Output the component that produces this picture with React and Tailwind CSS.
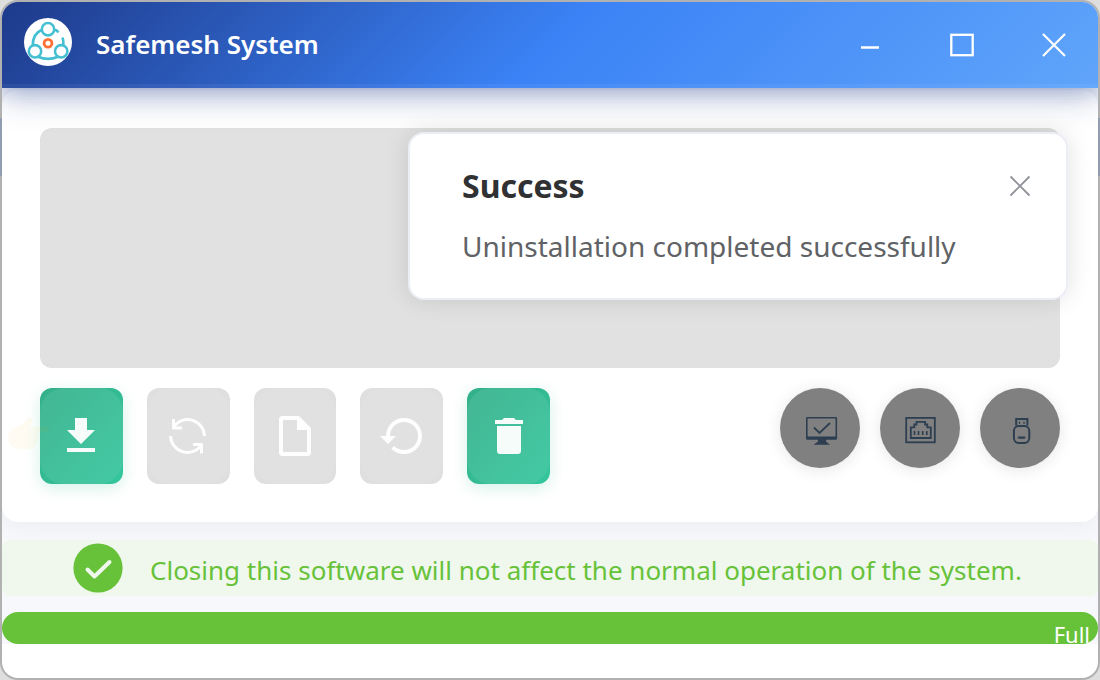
import { useState } from "react";

const ACTIONS = [
  { id: "install", label: "Install", icon: DownloadIcon, enabled: true },
  { id: "update", label: "Update", icon: RefreshIcon, enabled: false },
  { id: "logs", label: "Logs", icon: FileIcon, enabled: false },
  { id: "restore", label: "Restore", icon: RestoreIcon, enabled: false },
  { id: "uninstall", label: "Uninstall", icon: TrashIcon, enabled: true },
];

const DEVICES = [
  { id: "host", label: "Host status", icon: MonitorIcon },
  { id: "network", label: "Network port", icon: EthernetIcon },
  { id: "usb", label: "USB key", icon: UsbIcon },
];

function DownloadIcon() {
  return (
    <svg viewBox="0 0 24 24" className="size-12" fill="currentColor">
      <path d="M19 9h-4V3H9v6H5l7 7 7-7zM5 18v2h14v-2H5z" />
    </svg>
  );
}

function RefreshIcon() {
  return (
    <svg
      viewBox="0 0 48 48"
      className="size-12"
      fill="none"
      stroke="currentColor"
      strokeWidth="3"
    >
      <path d="M40.500 24A17 17 0 0 0 9.500 15" />
      <path d="M9.500 7v9h8.500" strokeLinejoin="round" />
      <path d="M6.500 24A17 17 0 0 0 37.500 33" />
      <path d="M37.500 41.500v-9h-8.500" strokeLinejoin="round" />
    </svg>
  );
}

function FileIcon() {
  return (
    <svg viewBox="0 0 24 24" className="size-12" fill="currentColor">
      <path d="M14 2H5.500C4.700 2 4 2.700 4 3.500v17c0 .8.700 1.500 1.500 1.500h13c.8 0 1.500-.7 1.500-1.500V8l-6-6zM6 20V4h7v5h5v11H6z" />
    </svg>
  );
}

function RestoreIcon() {
  return (
    <svg viewBox="0 0 24 24" className="size-12" fill="currentColor">
      <path d="M13 3a9 9 0 0 0-9 9H1l3.960 4L9 12H6a7 7 0 1 1 7 7c-1.930 0-3.680-.79-4.940-2.060l-1.420 1.420A8.950 8.950 0 0 0 13 21a9 9 0 0 0 0-18z" />
    </svg>
  );
}

function TrashIcon() {
  return (
    <svg viewBox="0 0 24 24" className="size-12" fill="currentColor">
      <path d="M6 19.500c0 .9.600 1.500 1.500 1.500h9c.9 0 1.500-.6 1.500-1.500V7H6v12.500zM19 4h-3.500l-1-1h-5l-1 1H5v2h14V4z" />
    </svg>
  );
}

function MonitorIcon() {
  return (
    <svg viewBox="0 0 40 40" className="size-10" fill="none" stroke="currentColor">
      <rect x="6.800" y="9.800" width="29.500" height="21" rx="0.5" strokeWidth="1.600" />
      <path d="M6.500 28.500h30v3h-30z" fill="currentColor" stroke="none" />
      <path d="M18 31h8v2.500l4 3.300H13.500l4.500-3.300z" fill="currentColor" stroke="none" />
      <path d="M14 19.500l5.500 5.500L30 15" strokeWidth="1.800" />
    </svg>
  );
}

function EthernetIcon() {
  return (
    <svg
      viewBox="0 0 40 40"
      className="size-10"
      fill="none"
      stroke="currentColor"
      strokeWidth="1.800"
    >
      <rect x="6.200" y="9.900" width="28.600" height="24.400" />
      <path d="M10.800 30V19.300h3.500v-2.800h2.200v-2.700h8.600v2.700h2.200v2.800h3.500V30z" />
      <path d="M14.500 23v4M18.500 23v4M22.700 23v4M26.800 23v4" strokeWidth="1.600" />
    </svg>
  );
}

function UsbIcon() {
  return (
    <svg
      viewBox="0 0 40 40"
      className="size-10"
      fill="none"
      stroke="currentColor"
      strokeWidth="2"
    >
      <path d="M16.200 17.500v-6.600h11.200v6.600" />
      <rect x="13.900" y="17.900" width="15.400" height="17" rx="5" />
      <path d="M18.800 29.600h5.600" strokeWidth="2.200" strokeLinecap="round" />
      <path d="M19.500 13.500v2.500M24 13.500v2.500" strokeWidth="1.200" />
    </svg>
  );
}

function Logo() {
  return (
    <svg viewBox="0 0 48 48" className="size-12 mb-1.5" fill="none">
      <circle cx="24" cy="24" r="24" fill="#fff" />
      <g stroke="#45bfd2" strokeWidth="2.600">
        <circle cx="24" cy="11.200" r="6.200" />
        <circle cx="11" cy="33.300" r="6.200" />
        <circle cx="37.200" cy="33.300" r="6.200" />
        <path d="M8.700 27.500C8.700 20 11.500 14.500 18 11.800" />
        <path d="M30 12l2.300.2 2.300 2.200" />
        <path d="M39.300 27.500V23l-.8-3.500" />
        <path d="M14 38.700c6 2.600 14 2.600 20 0" />
      </g>
      <circle cx="24" cy="25.300" r="3.900" stroke="#ff6f31" strokeWidth="2.800" />
    </svg>
  );
}

function TitleBar() {
  return (
    <header className="relative z-10 bg-[linear-gradient(135deg,#1e3a8a_0%,#3b82f6_50%,#60a5fa_100%)] shadow-[0_8px_32px_rgba(30,58,138,0.35),0_4px_16px_rgba(30,58,138,0.15)]">
      <div className="flex h-[86px] items-center border-b-4 border-white/5 pl-[22px] pt-1">
        <Logo />
        <h1 className="mb-0.5 ml-6 flex-1 text-[26px] font-semibold leading-9 text-white">
          Safemesh System
        </h1>
        <div className="flex gap-1 text-white">
          <button
            aria-label="Minimize"
            className="flex h-16 w-[88px] items-center justify-center"
          >
            <svg viewBox="0 0 24 24" className="size-6">
              <path d="M3 14.500h18" stroke="currentColor" strokeWidth="2.600" />
            </svg>
          </button>
          <button
            aria-label="Maximize"
            className="flex h-16 w-[88px] items-center justify-center"
          >
            <svg viewBox="0 0 24 24" className="size-6" fill="none">
              <rect x="1.300" y="1.800" width="21.400" height="20.400" stroke="currentColor" strokeWidth="2.300" />
            </svg>
          </button>
          <button
            aria-label="Close window"
            className="flex h-16 w-[88px] items-center justify-center"
          >
            <svg viewBox="0 0 24 24" className="size-6">
              <path d="M1 1l22 22M23 1L1 23" stroke="currentColor" strokeWidth="2.200" />
            </svg>
          </button>
        </div>
      </div>
    </header>
  );
}

function ActionButton({ label, icon: Icon, enabled }) {
  return (
    <button
      aria-label={label}
      disabled={!enabled}
      className={
        enabled
          ? "h-24 overflow-hidden rounded-xl bg-linear-to-br from-[#33b08a] to-[#33c69d] text-white/95 shadow-[0_4px_16px_rgba(52,190,150,0.2)]"
          : "h-24 overflow-hidden rounded-xl bg-[#dfdfdf] text-white/95"
      }
    >
      <span className="flex h-full items-center justify-center rounded-3xl bg-white/8">
        <Icon />
      </span>
    </button>
  );
}

function Toast({ title, message, onClose }) {
  return (
    <div
      role="alert"
      className="absolute right-[30px] top-[130px] z-20 flex w-[660px] items-start rounded-2xl border-2 border-[#ebeef5] bg-white py-7 pl-[52px] pr-[34px] shadow-[0_0_24px_rgba(0,0,0,0.12)]"
    >
      <div className="flex-1">
        <h2 className="text-[32px] font-bold leading-[48px] text-[#303133]">
          {title}
        </h2>
        <p className="mt-3 text-[28px] leading-[48px] text-[#606266]">
          {message}
        </p>
      </div>
      <button
        aria-label="Dismiss"
        onClick={onClose}
        className="mt-3 flex size-6 items-center justify-center text-[#909399]"
      >
        <svg viewBox="0 0 24 24" className="size-6">
          <path d="M2.500 2.500l19 19M21.500 2.500l-19 19" stroke="currentColor" strokeWidth="1.900" />
        </svg>
      </button>
    </div>
  );
}

// Faint hand that nudges the user toward the first action
function PointerHint() {
  return (
    <svg
      viewBox="0 0 44 40"
      className="absolute -left-8 top-7 h-10 w-11"
      fill="#ffb300"
      fillOpacity="0.05"
    >
      <path d="M0 22c0-7 5-10 12-12l8-8c3-2 5 1 4 4l-2 5h16c4 0 4 5 0 5H30v3c2 2 1 4-1 5 1 2 0 4-2 5 0 2-1 4-4 4H14C6 33 0 29 0 22z" />
    </svg>
  );
}

const App = () => {
  const [showToast, setShowToast] = useState(true);

  return (
    <div className="bg-[linear-gradient(to_bottom,#dedede_118px,#b4c6dd_118px,#b4c6dd_176px,#dedede_176px)] font-['Noto_Sans','Open_Sans',sans-serif]">
      <div className="relative flex min-h-screen flex-col overflow-hidden rounded-[18px] border-2 border-black/20 bg-white bg-clip-padding">
        <TitleBar />

        <div className="bg-[#f7f8fb] pt-0.5">
          <main className="rounded-2xl bg-white p-[38px] shadow-[0_4px_24px_rgba(0,0,0,0.05)]">
            <section
              aria-label="Output"
              className="h-60 overflow-hidden rounded-xl bg-[#dfdfdf]"
            >
              <div className="h-full rounded-2xl bg-white/8" />
            </section>

            <div className="mt-5 grid grid-cols-2">
              <div className="relative grid grid-cols-5 gap-6">
                {ACTIONS.map((action) => (
                  <ActionButton key={action.id} {...action} />
                ))}
                <PointerHint />
              </div>
              <div className="flex justify-end gap-5">
                {DEVICES.map(({ id, label, icon: Icon }) => (
                  <button
                    key={id}
                    aria-label={label}
                    className="flex size-20 items-center justify-center rounded-full bg-[#808080] text-[#2c3e50] shadow-[0_2px_16px_rgba(0,0,0,0.1)]"
                  >
                    <Icon />
                  </button>
                ))}
              </div>
            </div>
          </main>

          <div
            role="status"
            className="mt-[18px] flex h-14 items-center rounded-lg bg-[#f0f8ed] pl-[71px] text-[#67c23a]"
          >
            <svg viewBox="0 0 50 50" className="size-[50px]">
              <circle cx="25" cy="25" r="24.600" fill="currentColor" />
              <path
                d="M14.500 26.500l7 7 15-14.500"
                fill="none"
                stroke="#f0f8ed"
                strokeWidth="4"
                strokeLinecap="round"
                strokeLinejoin="round"
              />
            </svg>
            <p className="ml-[27px] pt-1 text-[26px] leading-9">
              Closing this software will not affect the normal operation of the
              system.
            </p>
          </div>

          <div
            role="progressbar"
            aria-valuenow={100}
            aria-label="Installation progress"
            className="mt-4 h-8 rounded-2xl bg-[#67c23a] pr-2 pt-1 text-right text-[22px] leading-9 text-white"
          >
            Full
          </div>
        </div>

        {showToast && (
          <Toast
            title="Success"
            message="Uninstallation completed successfully"
            onClose={() => setShowToast(false)}
          />
        )}
      </div>
    </div>
  );
};

export default App;
